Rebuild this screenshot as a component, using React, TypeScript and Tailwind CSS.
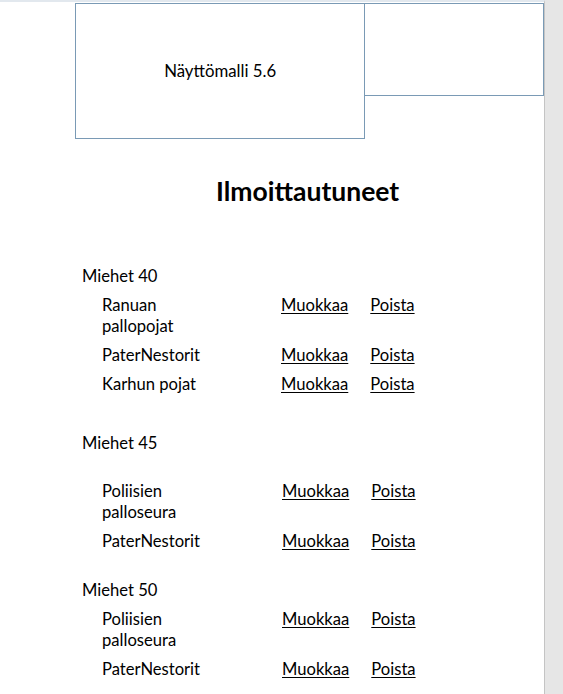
import React from 'react';

type Group = {
  title: string;
  spaced?: boolean;
  offset?: boolean;
  teams: string[];
};

const groups: Group[] = [
  { title: 'Miehet 40', teams: ['Ranuan pallopojat', 'PaterNestorit', 'Karhun pojat'] },
  { title: 'Miehet 45', spaced: true, offset: true, teams: ['Poliisien palloseura', 'PaterNestorit'] },
  { title: 'Miehet 50', offset: true, teams: ['Poliisien palloseura', 'PaterNestorit'] },
];

function TeamRow({ name, offset }: { name: string; offset?: boolean }) {
  return (
    <div className="flex items-start">
      <div className="w-[120px] shrink-0 pl-[20px]">{name}</div>
      <div className={`flex gap-[22px] ${offset ? 'pl-[80px]' : 'pl-[79px]'}`}>
        <a href="#" className="underline underline-offset-2 decoration-1">Muokkaa</a>
        <a href="#" className="underline underline-offset-2 decoration-1">Poista</a>
      </div>
    </div>
  );
}

export default function App() {
  return (
    <div className="flex min-h-[694px] bg-[#e6e6e6] text-black" style={{ fontFamily: 'Lato, "Liberation Sans", sans-serif' }}>
      <div className="w-[545px] shrink-0 bg-white border-r border-[#c4c4c4] border-t-2 border-t-[#e2e8ee]">
        <div className="flex items-start pt-px pl-[75px]">
          <div className="w-[291px] h-[136px] border border-[#7a9ab5] flex items-center justify-center text-[16.8px]">
            Näyttömalli 5.6
          </div>
          <div className="w-[179px] h-[93px] border border-l-0 border-[#7a9ab5]" />
        </div>

        <h1 className="mt-[36px] pl-[216px] text-[26.5px] leading-[32px] font-bold">Ilmoittautuneet</h1>

        <div className="mt-[59px] pl-[82px] text-[16.6px] leading-[21px] flex flex-col">
          {groups.map((g, i) => (
            <div
              key={g.title}
              className={`flex flex-col gap-2 ${i === 1 ? 'mt-[38px]' : ''} ${i === 2 ? 'mt-[28px]' : ''}`}
            >
              <div className={g.spaced ? 'mb-[19px]' : ''}>{g.title}</div>
              {g.teams.map((t) => (
                <TeamRow key={t} name={t} offset={g.offset} />
              ))}
            </div>
          ))}
        </div>
      </div>
    </div>
  );
}
